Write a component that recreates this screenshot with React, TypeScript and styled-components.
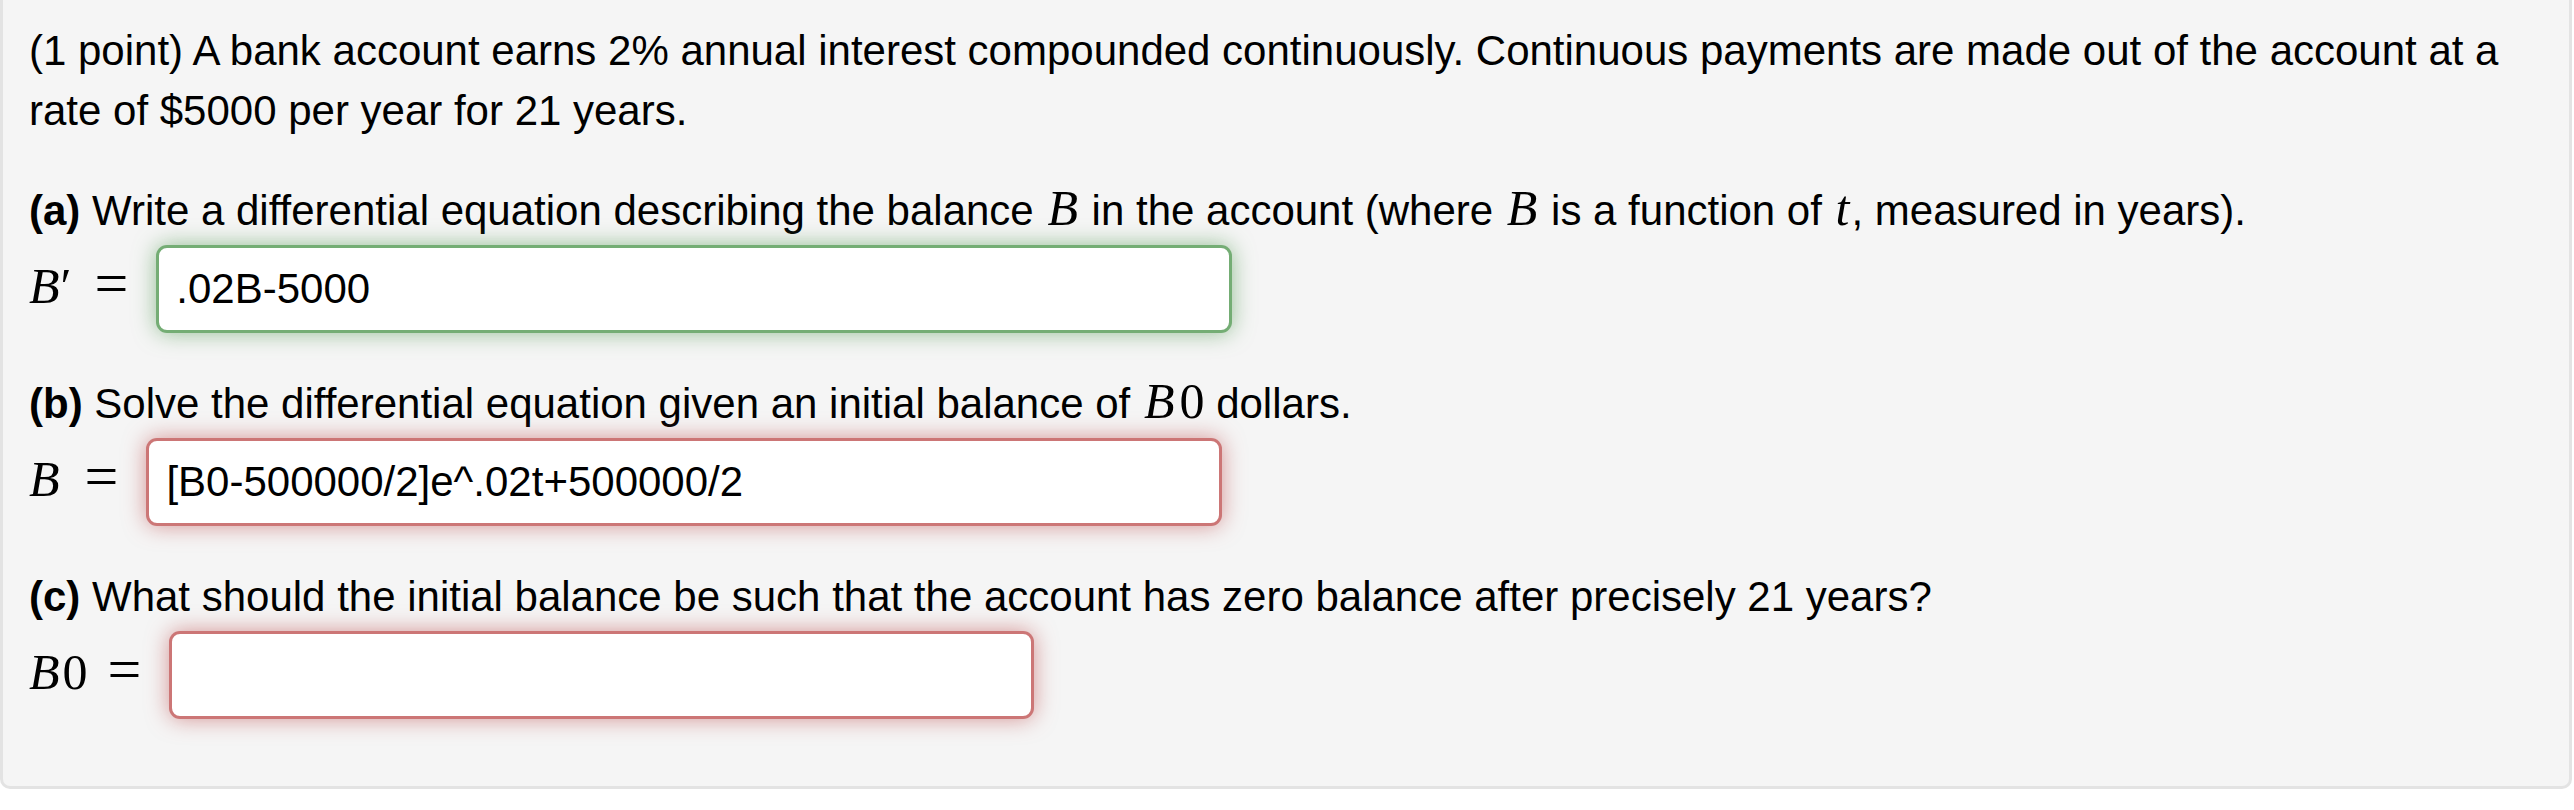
import styled, { createGlobalStyle } from "styled-components";

const GlobalStyle = createGlobalStyle`
  html, body {
    margin: 0;
    padding: 0;
    background: #ffffff;
  }
  body {
    font-family: "Liberation Sans", Arial, sans-serif;
    color: #000;
  }
`;

const Panel = styled.div`
  margin-right: 2px;
  background: #f5f5f5;
  border: 3px solid #e3e3e3;
  border-top: none;
  border-radius: 0 0 10px 10px;
  padding: 21px 26px 67px;
  font-size: 42px;
  line-height: 60px;
`;

const Text = styled.p<{ $gap?: number }>`
  margin: ${(p) => p.$gap ?? 0}px 0 0;
`;

const Strong = styled.b`
  font-weight: 700;
`;

const MathVar = styled.span<{ $inline?: boolean }>`
  font-family: "Liberation Serif", "Times New Roman", serif;
  font-style: italic;
  font-size: 50px;
  line-height: 1;
  margin: 0 ${(p) => (p.$inline ? 2 : 0)}px;
`;

const MathNum = styled.span`
  font-family: "Liberation Serif", "Times New Roman", serif;
  font-size: 50px;
  line-height: 1;
  margin-left: 3px;
`;

const Row = styled.div`
  display: flex;
  align-items: center;
  height: 88px;
  margin-top: 4px;
`;

const MathLabel = styled.span`
  display: inline-flex;
  align-items: baseline;
  font-family: "Liberation Serif", "Times New Roman", serif;
  font-size: 50px;
  line-height: 50px;
  margin-bottom: 10px;
`;

const Prime = styled.span`
  font-size: 50px;
  margin-left: 1px;
`;

const Eq = styled.span<{ $lead: number }>`
  font-size: 60px;
  margin: 0 28px 0 ${(p) => p.$lead}px;
`;

const AnswerInput = styled.input<{ $state: "correct" | "incorrect"; $width: number }>`
  box-sizing: border-box;
  width: ${(p) => p.$width}px;
  height: 88px;
  padding: 0 17px;
  font-family: "Liberation Sans", Arial, sans-serif;
  font-size: 42px;
  color: #000;
  background: #fff;
  border-radius: 11px;
  outline: none;
  border: 3px solid
    ${(p) => (p.$state === "correct" ? "rgba(81, 153, 81, 0.8)" : "rgba(191, 84, 84, 0.8)")};
  box-shadow: 0 0 22px
    ${(p) => (p.$state === "correct" ? "rgba(81, 153, 81, 0.6)" : "rgba(191, 84, 84, 0.6)")};
`;

const App = () => {
  return (
    <>
      <GlobalStyle />
      <Panel>
        <Text>
          (1 point) A bank account earns 2% annual interest compounded continuously. Continuous
          payments are made out of the account at a rate of $5000 per year for 21 years.
        </Text>

        <Text $gap={40}>
          <Strong>(a)</Strong> Write a differential equation describing the balance{" "}
          <MathVar $inline>B</MathVar> in the account (where <MathVar $inline>B</MathVar> is a
          function of <MathVar $inline>t</MathVar>, measured in years).
        </Text>
        <Row>
          <MathLabel>
            <MathVar>B</MathVar>
            <Prime>′</Prime>
            <Eq $lead={23}>=</Eq>
          </MathLabel>
          <AnswerInput $state="correct" $width={1076} defaultValue=".02B-5000" />
        </Row>

        <Text $gap={41}>
          <Strong>(b)</Strong> Solve the differential equation given an initial balance of{" "}
          <MathVar $inline>B</MathVar>
          <MathNum>0</MathNum> dollars.
        </Text>
        <Row>
          <MathLabel>
            <MathVar>B</MathVar>
            <Eq $lead={25}>=</Eq>
          </MathLabel>
          <AnswerInput
            $state="incorrect"
            $width={1076}
            defaultValue="[B0-500000/2]e^.02t+500000/2"
          />
        </Row>

        <Text $gap={41}>
          <Strong>(c)</Strong> What should the initial balance be such that the account has zero
          balance after precisely 21 years?
        </Text>
        <Row>
          <MathLabel>
            <MathVar>B</MathVar>
            <MathNum>0</MathNum>
            <Eq $lead={20}>=</Eq>
          </MathLabel>
          <AnswerInput $state="incorrect" $width={865} defaultValue="" />
        </Row>
      </Panel>
    </>
  );
};

export default App;
